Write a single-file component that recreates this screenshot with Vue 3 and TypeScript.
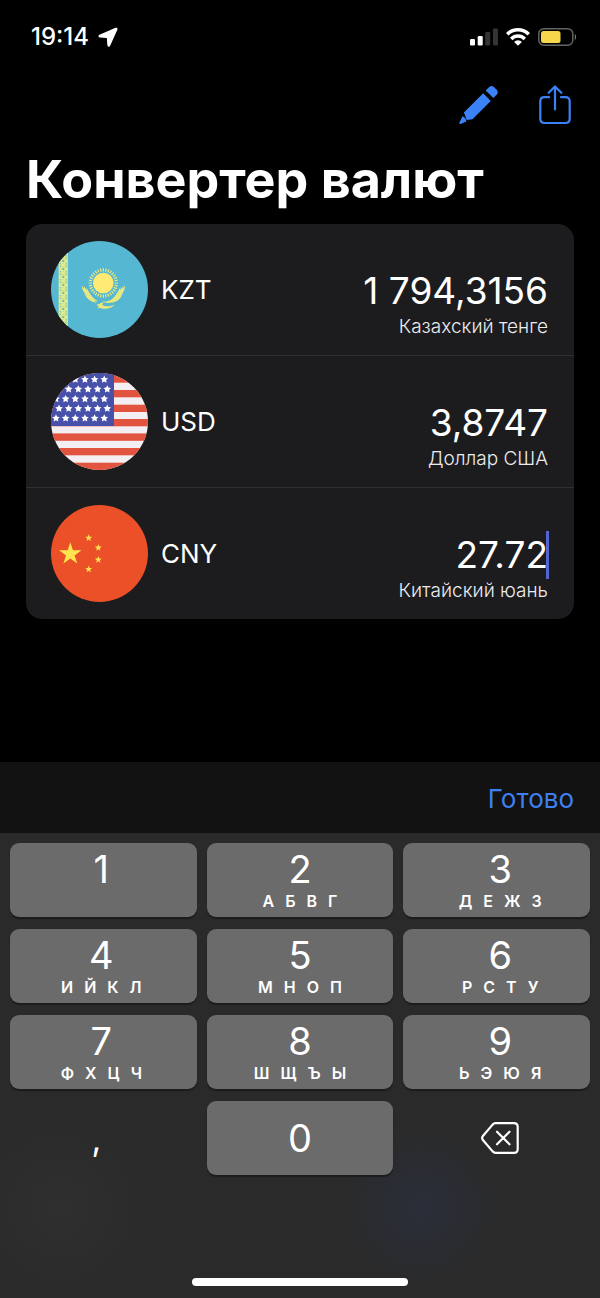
<script setup lang="ts">
import { ref } from 'vue'

interface Currency {
  code: string
  name: string
  amount: string
  active?: boolean
}

interface Key {
  digit: string
  letters: string[]
}

const currencies = ref<Currency[]>([
  { code: 'KZT', name: 'Казахский тенге', amount: '1 794,3156' },
  { code: 'USD', name: 'Доллар США', amount: '3,8747' },
  { code: 'CNY', name: 'Китайский юань', amount: '27.72', active: true },
])

const keys: Key[] = ['', 'АБВГ', 'ДЕЖЗ', 'ИЙКЛ', 'МНОП', 'РСТУ', 'ФХЦЧ', 'ШЩЪЫ', 'ЬЭЮЯ'].map(
  (letters, i) => ({ digit: String(i + 1), letters: letters.split('') }),
)

function star(cx: number, cy: number, r: number, inner = 0.42): string {
  return Array.from({ length: 10 }, (_, i) => {
    const radius = i % 2 ? r * inner : r
    const a = (Math.PI * i) / 5 - Math.PI / 2
    return `${(cx + radius * Math.cos(a)).toFixed(2)},${(cy + radius * Math.sin(a)).toFixed(2)}`
  }).join(' ')
}

const usStars: string[] = []
for (let row = 0; row < 5; row++) {
  for (let col = 0; col < 6; col++) {
    usStars.push(star((row % 2 ? 8 : 5) + col * 9.65, 6.5 + row * 9.7, 4, 0.5))
  }
}

const redStripes = [
  [0, 9.7], [17, 7.3], [31.7, 7.3], [46, 7.3], [60.4, 7.4], [75, 7.3], [89.7, 8],
]

const cnStars = [
  star(19.3, 49, 11.8, 0.38),
  star(37.7, 33, 3.7),
  star(47.3, 42.7, 3.7),
  star(47.3, 54.7, 3.7),
  star(37.7, 64.3, 3.7),
]

const rays = Array.from({ length: 32 }, (_, i) => i * 11.25)
const ornament = Array.from({ length: 13 }, (_, i) => i * 8 - 4)
</script>

<template>
  <div class="screen">
    <header class="status">
      <div class="clock">
        <span>19:14</span>
        <svg width="20" height="20" viewBox="0 0 20 20" aria-hidden="true">
          <path d="M17.800 1.400 1.700 8.400c-1 .5-.8 1.300.3 1.400l7.400.6.600 7.800c.1 1.100 1.200 1.200 1.600.3l7.200-16c.4-.9-.2-1.400-1-1.100z" fill="#fff" stroke="#fff" stroke-width="1.200" stroke-linejoin="round" />
        </svg>
      </div>
      <div class="indicators">
        <svg width="28" height="18" viewBox="0 0 28 18" aria-hidden="true">
          <rect x="0" y="11" width="5" height="6.500" rx="1.300" fill="#fff" />
          <rect x="7.700" y="8" width="5" height="9.500" rx="1.300" fill="#fff" />
          <rect x="15.200" y="4" width="5" height="13.500" rx="1.300" fill="#343434" />
          <rect x="23" y="0.500" width="5" height="17" rx="1.300" fill="#343434" />
        </svg>
        <svg width="24" height="18" viewBox="0 0 24 18" aria-hidden="true">
          <g fill="none" stroke="#fff" stroke-width="3.500">
            <path d="M1.200 6.300a15.300 15.300 0 0 1 21.600 0" />
            <path d="M5.200 10.900a9.600 9.600 0 0 1 13.600 0" />
          </g>
          <path d="M12 17.800 8.100 13.900a5.500 5.500 0 0 1 7.800 0z" fill="#fff" />
        </svg>
        <svg width="39" height="18" viewBox="0 0 39 18" aria-hidden="true">
          <rect x="0.800" y="0.800" width="34" height="16.400" rx="5" fill="none" stroke="#636363" stroke-width="1.500" />
          <rect x="3" y="3" width="19.500" height="12" rx="2.500" fill="#f8d64b" />
          <path d="M36.800 6c1.700.6 1.700 5.400 0 6z" fill="#777" />
        </svg>
      </div>
    </header>

    <nav class="tools">
      <button type="button" aria-label="Изменить">
        <svg width="40" height="40" viewBox="0 0 40 40" fill="#3b82f6" aria-hidden="true">
          <path d="M30.500 1.700c1.500-1.200 3.100-1 4.400.3l2.800 2.800c1.400 1.500 1.500 3.200.2 4.600l-3.500 3.700-7.700-7.700z" />
          <path d="M24.200 8.300 31.800 16 13.500 34.300 7.700 35l-2-5.500-.8-2z" />
          <path d="M3.400 31.200.4 37.800c-.3.900.3 1.500 1.200 1.200l5.700-2.500c-.2-2.400-1.500-4.400-3.900-5.300z" />
        </svg>
      </button>
      <button type="button" aria-label="Поделиться">
        <svg width="32" height="40" viewBox="0 0 32 40" fill="none" stroke="#3b82f6" stroke-width="2.200" stroke-linecap="round" stroke-linejoin="round" aria-hidden="true">
          <path d="M10 12.200H5.500c-2.700 0-4.200 1.500-4.200 4.200v17.400c0 2.700 1.500 4.200 4.200 4.200h21c2.700 0 4.200-1.500 4.200-4.200V16.400c0-2.700-1.500-4.200-4.200-4.200H22" />
          <path d="M16 24.500V1.500M9.700 7.800 16 1.500l6.300 6.300" />
        </svg>
      </button>
    </nav>

    <main>
      <h1>Конвертер валют</h1>
      <ul class="card">
        <li v-for="c in currencies" :key="c.code" class="row">
          <svg v-if="c.code === 'KZT'" class="flag" viewBox="0 0 97 97" aria-hidden="true">
            <rect width="97" height="97" fill="#55b7d1" />
            <g fill="none" stroke="#e5eb86" stroke-width="1.300">
              <path d="M8.300 0V97M16.200 0V97" />
              <path v-for="y in ornament" :key="y" :d="`M8.300 ${y}l7.900 8M16.200 ${y}l-7.900 8M12.200 ${y - 2}l2.600 2-2.600 2-2.600-2zM9 ${y + 4}h2.200M13.400 ${y + 4}h2.200`" />
            </g>
            <circle cx="52.300" cy="42" r="10.300" fill="#ffeb74" />
            <g stroke="#f1e980" stroke-width="1.200">
              <path v-for="a in rays" :key="a" d="M52.300 30.500V27.300" :transform="`rotate(${a} 52.300 42)`" />
            </g>
            <g fill="#e9e87c">
              <path d="M30.500 44.500l2.600 3.200-.2-2.700 2.800 4.200-.3-2.700c3 5.500 5 9 9 12.300l3.200 1.700-4.800-.8 3.500 2.100c-6.700-.5-10.700-4.500-13-8.800l3 2.300c-3.200-3.300-5.400-6.800-5.800-10.800z" />
              <path d="M74.100 44.500l-2.600 3.200.2-2.700-2.800 4.200.3-2.700c-3 5.500-5 9-9 12.300l-5.200 1.900-3.600-.8c2 1.800 4.600 2.200 8.200 1.900 6.700-.5 10.700-4.500 11.700-8.800l-2 2.300c3.200-3.300 4.400-6.800 4.800-10.800z" />
              <path d="M45.500 63.500c3 0 4.500-2.500 7.200-2l-1.500 2.200c3 2 8.500 2.200 13-.2-3.500 4-10 5.300-14.700 3.400l-3 .3 1.300-1.800z" />
            </g>
          </svg>
          <svg v-else-if="c.code === 'USD'" class="flag" viewBox="0 0 97 97" aria-hidden="true">
            <rect width="97" height="97" fill="#f3eff2" />
            <rect v-for="s in redStripes" :key="s[0]" x="0" :y="s[0]" width="97" :height="s[1]" fill="#e2543f" />
            <rect width="63" height="53" fill="#4751a9" />
            <polygon v-for="p in usStars" :key="p" :points="p" fill="#fff" />
          </svg>
          <svg v-else class="flag" viewBox="0 0 97 97" aria-hidden="true">
            <rect width="97" height="97" fill="#eb5028" />
            <polygon v-for="p in cnStars" :key="p" :points="p" fill="#ffe44f" />
          </svg>
          <span class="code">{{ c.code }}</span>
          <div class="value">
            <div class="field">
              <input :id="`amount-${c.code}`" v-model="c.amount" type="text" inputmode="decimal" />
              <i v-if="c.active" class="caret"></i>
            </div>
            <label :for="`amount-${c.code}`">{{ c.name }}</label>
          </div>
        </li>
      </ul>
    </main>

    <footer class="keyboard">
      <div class="accessory">
        <button type="button">Готово</button>
      </div>
      <div class="keys">
        <button v-for="k in keys" :key="k.digit" type="button" class="key">
          <span class="digit">{{ k.digit }}</span>
          <span class="letters"><span v-for="l in k.letters" :key="l">{{ l }}</span></span>
        </button>
        <button type="button" class="key plain comma">,</button>
        <button type="button" class="key zero"><span class="digit">0</span></button>
        <button type="button" class="key plain" aria-label="Удалить">
          <svg width="38" height="32" viewBox="0 0 38 32" fill="none" stroke="#fff" stroke-width="2.200" stroke-linecap="round" stroke-linejoin="round" aria-hidden="true">
            <path d="M14.500 1.200H33c2.500 0 3.700 1.200 3.700 3.600v22.400c0 2.400-1.200 3.600-3.700 3.600H14.500c-1.200 0-2-.5-2.900-1.400L2.100 18.200c-1.400-1.600-1.400-2.800 0-4.400l9.500-11.200c.9-.9 1.700-1.400 2.900-1.400z" />
            <path d="M16 9.700 28.500 22.300M28.500 9.700 16 22.300" />
          </svg>
        </button>
      </div>
      <div class="home"></div>
    </footer>
  </div>
</template>

<style>
body {
  margin: 0;
  background: #000;
}
</style>

<style scoped>
.screen {
  display: flex;
  flex-direction: column;
  min-height: 100vh;
  background: #000;
  color: #fff;
  font-family: Inter, "Liberation Sans", sans-serif;
}

button {
  margin: 0;
  padding: 0;
  border: 0;
  background: none;
  color: inherit;
  font: inherit;
}

svg {
  display: block;
}

.status {
  display: flex;
  justify-content: space-between;
  align-items: center;
  height: 74px;
  padding: 0 23px 0 31px;
}

.clock {
  display: flex;
  align-items: center;
  gap: 9px;
  font-size: 24px;
  font-weight: 500;
  line-height: 30px;
}

.indicators {
  display: flex;
  align-items: center;
  gap: 8px;
}

.tools {
  display: flex;
  justify-content: flex-end;
  gap: 40px;
  padding: 11px 29px 0;
}

main {
  padding: 0 26px;
}

h1 {
  margin: 23px 0 12px;
  font-size: 52px;
  font-weight: 700;
  line-height: 64px;
  white-space: nowrap;
}

.card {
  margin: 0;
  padding: 0;
  border-radius: 16px;
  background: #1c1c1e;
  list-style: none;
}

.row {
  display: flex;
  align-items: center;
  height: 131px;
  padding: 0 26px 0 25px;
}

.row + .row {
  border-top: 1px solid #303032;
}

.flag {
  flex: none;
  width: 97px;
  height: 97px;
  border-radius: 50%;
}

.code {
  margin-left: 13px;
  font-size: 26px;
  line-height: 32px;
}

.value {
  display: flex;
  flex: 1;
  flex-direction: column;
  align-items: flex-end;
  min-width: 0;
  padding-top: 26px;
}

.field {
  position: relative;
  width: 100%;
}

input {
  display: block;
  box-sizing: border-box;
  width: 100%;
  height: 48px;
  padding: 0;
  border: 0;
  outline: 0;
  background: none;
  color: #fff;
  font: 400 37px/48px Inter, "Liberation Sans", sans-serif;
  text-align: right;
}

.caret {
  position: absolute;
  top: 0;
  right: -1px;
  width: 3px;
  height: 48px;
  background: #5266d0;
}

label {
  font-size: 19px;
  font-weight: 300;
  line-height: 24px;
  color: #ececee;
}

.keyboard {
  display: flex;
  flex-direction: column;
  margin-top: auto;
  background:
    radial-gradient(circle at 70% 83%, #292e39 0, #292e3900 80px),
    radial-gradient(circle at 10% 83%, #2f2f2f 0, #2f2f2f00 90px),
    #2a2a2a;
}

.accessory {
  display: flex;
  justify-content: flex-end;
  align-items: center;
  height: 71px;
  padding: 2px 26px 0;
  box-sizing: border-box;
  background: #121212;
  color: #3f80f0;
  font-size: 26px;
}

.keys {
  display: grid;
  grid-template-columns: repeat(3, 1fr);
  gap: 12px 10px;
  padding: 10px;
}

.key {
  display: flex;
  flex-direction: column;
  align-items: center;
  height: 74px;
  padding-top: 3px;
  border-radius: 9px;
  background: #6b6b6b;
  box-shadow: 0 2px 1px #1c1c1c;
}

.key:nth-child(3n + 1) {
  padding-right: 4px;
}

.key:nth-child(3n) {
  padding-left: 7px;
}

.digit {
  font-size: 38px;
  font-weight: 400;
  line-height: 46px;
}

.letters {
  display: flex;
  gap: 11px;
  font-size: 16px;
  font-weight: 600;
  line-height: 18px;
}

.zero,
.plain {
  justify-content: center;
  padding-top: 0;
}

.plain {
  background: none;
  box-shadow: none;
}

.key.comma {
  padding-right: 14px;
  font-size: 34px;
}

.home {
  width: 36%;
  height: 8px;
  margin: 93px auto 12px;
  border-radius: 4px;
  background: #fff;
}
</style>
